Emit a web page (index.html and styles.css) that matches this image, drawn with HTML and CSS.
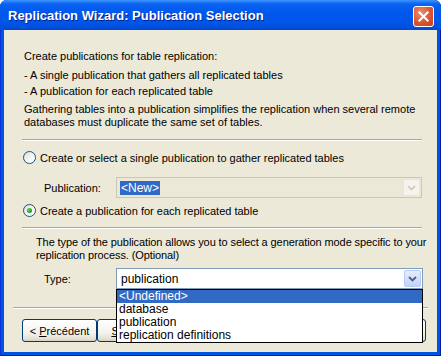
FILE: index.html
```html
<!DOCTYPE html>
<html lang="en">

<head>
    <meta charset="UTF-8">
    <title>Replication Wizard: Publication Selection</title>
    <link rel="stylesheet" href="styles.css">
</head>

<body>
    <!-- wizard window -->
    <div class="window">
        <div class="titlebar">
            <span class="title">Replication Wizard: Publication Selection</span>
            <button class="close-btn" title="Close">
                <svg width="21" height="21" viewBox="0 0 21 21">
                    <path d="M6 6 L15 15 M15 6 L6 15" stroke="#fff" stroke-width="2.2" stroke-linecap="square" />
                </svg>
            </button>
        </div>

        <div class="client">
            <!-- intro text -->
            <div class="intro">
                <div class="line">Create publications for table replication:</div>
                <div class="line gap-6">- A single publication that gathers all replicated tables</div>
                <div class="line gap-3">- A publication for each replicated table</div>
                <div class="line gap-5">Gathering tables into a publication simplifies the replication when several remote databases must duplicate the same set of tables.</div>
            </div>

            <div class="separator"></div>

            <!-- choice of publication mode -->
            <label class="radio-row first">
                <span class="radio"></span>
                <span>Create or select a single publication to gather replicated tables</span>
            </label>

            <div class="field-row pub-row">
                <span class="field-label">Publication:</span>
                <div class="combo disabled">
                    <span class="combo-text"><span class="selected-text">&lt;New&gt;</span></span>
                    <span class="combo-btn">
                        <svg width="9" height="6" viewBox="0 0 9 6"><path d="M1 1 L4.5 4.5 L8 1" fill="none" stroke="#C9C7BA" stroke-width="1.6" /></svg>
                    </span>
                </div>
            </div>

            <label class="radio-row second">
                <span class="radio checked"></span>
                <span>Create a publication for each replicated table</span>
            </label>

            <div class="separator"></div>

            <div class="desc">The type of the publication allows you to select a generation mode specific to your replication process. (Optional)</div>

            <div class="field-row type-row">
                <span class="field-label">Type:</span>
                <div class="combo">
                    <span class="combo-text">publication</span>
                    <span class="combo-btn active">
                        <svg width="9" height="6" viewBox="0 0 9 6"><path d="M1 1 L4.5 4.5 L8 1" fill="none" stroke="#4D6185" stroke-width="1.8" /></svg>
                    </span>
                    <!-- open list of the combo -->
                    <div class="dropdown-list">
                        <div class="list-item highlighted">&lt;Undefined&gt;</div>
                        <div class="list-item">database</div>
                        <div class="list-item">publication</div>
                        <div class="list-item">replication definitions</div>
                    </div>
                </div>
            </div>

            <div class="separator bottom"></div>

            <!-- wizard buttons (the last two sit under the open list) -->
            <div class="buttons">
                <button class="btn">&lt; <u>P</u>récédent</button>
                <button class="btn"><u>S</u>uivant &gt;</button>
                <button class="btn push-right"></button>
                <button class="btn spaced"></button>
            </div>
        </div>
    </div>
</body>

</html>
```

FILE: styles.css
```css
/* page */
body {
    margin: 0;
    font-family: "Liberation Sans", Arial, sans-serif;
    font-size: 11px;
    background-color: #ffffff;
}

/* window frame */
.window {
    width: 441px;
    height: 356px;
    display: flex;
    flex-direction: column;
    background-color: #0054E3;
    border-radius: 7px 7px 0 0;
    box-shadow: inset 1px 0 0 #0831D9, inset -1px 0 0 #001EA0, inset 0 -1px 0 #001EA0;
    overflow: hidden;
}

/* title bar */
.titlebar {
    height: 30px;
    display: flex;
    align-items: center;
    justify-content: space-between;
    padding: 0 7px 0 8px;
    background: linear-gradient(#3D95FF 0, #0A62F0 4px, #0058EE 12px, #0055E6 24px, #0049D4 30px);
}

.title {
    color: #ffffff;
    font-weight: bold;
    font-size: 13px;
    text-shadow: 1px 1px 0 #0A1E8A;
    margin-top: 1px;
}

.close-btn {
    width: 21px;
    height: 21px;
    padding: 0;
    border: 1px solid #ffffff;
    border-radius: 3px;
    background: radial-gradient(circle at 35% 30%, #EC8D6D 0, #DB552F 55%, #C2401C 100%);
    display: flex;
    align-items: center;
    justify-content: center;
    margin-top: 2px;
}

.close-btn svg {
    width: 19px;
    height: 19px;
}

/* client area */
.client {
    flex: 1;
    margin: 0 4px 4px 4px;
    background-color: #ECE9D8;
    display: flex;
    flex-direction: column;
}

.intro {
    padding: 20px 16px 0 20px;
    line-height: 13px;
}

.gap-6 { margin-top: 6px; }
.gap-3 { margin-top: 3px; }
.gap-5 { margin-top: 5px; }

/* etched separator */
.separator {
    height: 1px;
    border-bottom: 1px solid #ffffff;
    background-color: #ACA899;
    margin: 10px 15px 0 18px;
}

.separator.bottom {
    margin: 18px 9px 0 9px;
}

/* radio buttons */
.radio-row {
    display: flex;
    align-items: center;
    gap: 4px;
    height: 13px;
    padding-left: 19px;
}

.radio-row.first { margin-top: 10px; }
.radio-row.second { margin-top: 6px; }

.radio {
    width: 11px;
    height: 11px;
    border: 1px solid #1C5180;
    border-radius: 50%;
    background: linear-gradient(135deg, #DCDCD6 0, #F5F4EF 50%, #ffffff 100%);
    display: flex;
    align-items: center;
    justify-content: center;
}

.radio.checked::after {
    content: "";
    width: 5px;
    height: 5px;
    border-radius: 50%;
    background: radial-gradient(circle at 40% 35%, #5FD65F 0, #21A121 60%, #1A8A1A 100%);
}

/* label + combo rows */
.field-row {
    display: flex;
    align-items: center;
    padding-left: 40px;
}

.pub-row { margin-top: 13px; }
.type-row { margin-top: 6px; }

.field-label {
    width: 72px;
}

.combo {
    position: relative;
    width: 305px;
    height: 19px;
    border: 1px solid #7F9DB9;
    background-color: #ffffff;
    display: flex;
    align-items: center;
    justify-content: space-between;
}

.combo.disabled {
    width: 304px;
    border-color: #C9C7BA;
    background-color: #EBE8D8;
}

.combo-text {
    padding-left: 3px;
    font-size: 12px;
}

.type-row .combo-text {
    padding-left: 4px;
}

.selected-text {
    background-color: #316AC5;
    color: #ffffff;
    padding: 0 1px;
    font-size: 12px;
}

.combo-btn {
    width: 15px;
    height: 15px;
    margin-right: 1px;
    border: 1px solid #E8E6DC;
    border-radius: 2px;
    background-color: #F4F3EE;
    display: flex;
    align-items: center;
    justify-content: center;
}

.combo-btn.active {
    border-color: #B9CBF3;
    background: linear-gradient(#E6EEFC, #C1D3FB);
}

/* open drop-down list */
.dropdown-list {
    position: absolute;
    top: 20px;
    left: -1px;
    width: 305px;
    border: 1px solid #000000;
    background-color: #ffffff;
    font-size: 12px;
}

.list-item {
    height: 13px;
    line-height: 13px;
    padding-left: 2px;
}

.list-item.highlighted {
    background-color: #316AC5;
    color: #ffffff;
}

/* description text */
.desc {
    padding: 0 0 0 32px;
    margin-top: 7px;
    line-height: 13px;
    letter-spacing: -0.1px;
}

/* bottom buttons */
.buttons {
    display: flex;
    margin-top: 10px;
    padding: 0 11px 0 18px;
}

.btn {
    width: 75px;
    height: 23px;
    padding: 0;
    font-family: "Liberation Sans", Arial, sans-serif;
    font-size: 11px;
    color: #000000;
    border: 1px solid #003C74;
    border-radius: 3px;
    background: linear-gradient(#ffffff 0, #F4F3EE 60%, #E3E0D4 90%, #D6D0C5 100%);
}

.push-right { margin-left: auto; }
.spaced { margin-left: 6px; }
```
